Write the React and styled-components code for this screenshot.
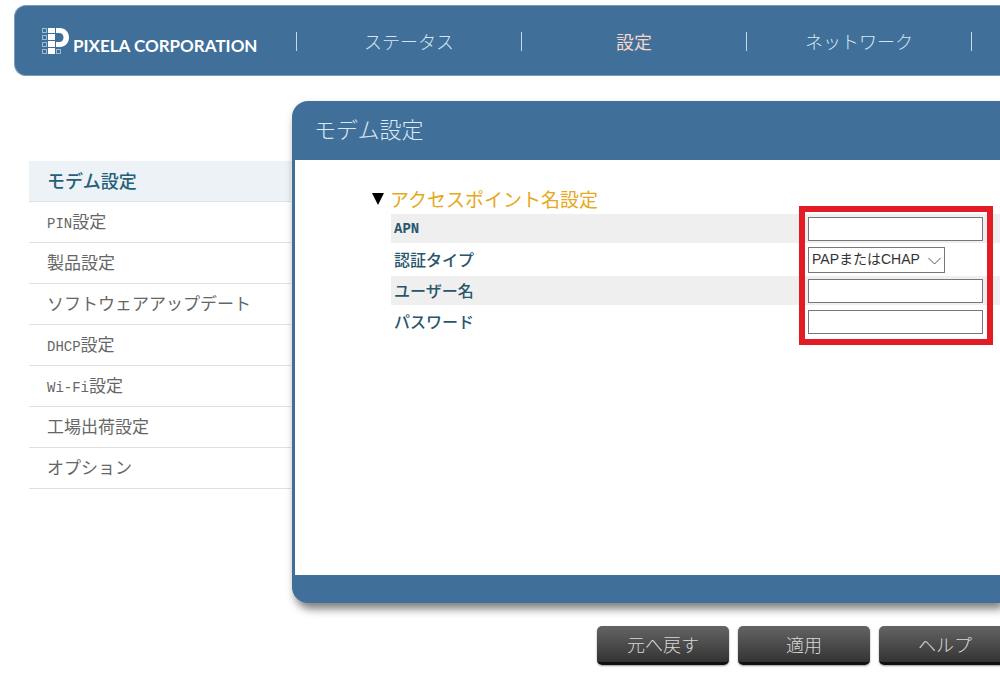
import React from "react";
import styled, { createGlobalStyle, css } from "styled-components";

const navItems = [
  { label: "ステータス" },
  { label: "設定", active: true },
  { label: "ネットワーク" },
];

const menuItems = [
  { label: "モデム設定", active: true },
  { latin: "PIN", label: "設定" },
  { label: "製品設定" },
  { label: "ソフトウェアアップデート" },
  { latin: "DHCP", label: "設定" },
  { latin: "Wi-Fi", label: "設定" },
  { label: "工場出荷設定" },
  { label: "オプション" },
];

const Logo = () => (
  <LogoLink href="#top">
    <svg width="28" height="28" viewBox="0 0 28 28" aria-hidden="true">
      <g fill="none" stroke="#9dbbd2" strokeWidth="1">
        <rect x="1.5" y="1.5" width="4" height="4" />
        <rect x="1.5" y="8.5" width="4" height="4" />
        <rect x="1.5" y="15.5" width="4" height="4" />
        <rect x="1.5" y="22.5" width="4" height="4" />
        <rect x="15.5" y="22.5" width="4" height="4" />
      </g>
      <g fill="#fff">
        <rect x="7" y="1" width="7" height="5" />
        <rect x="7" y="7" width="7" height="6" />
        <rect x="7" y="14" width="7" height="6" />
        <rect x="7" y="21" width="7" height="6" />
        <path d="M15 1h4c5 0 9 4 9 9.500s-4 9.500-9 9.500h-4v-5h3c3 0 4.500-2 4.500-4.500S21 6 18 6h-3z" />
      </g>
    </svg>
    <span>PIXELA CORPORATION</span>
  </LogoLink>
);

export default function App() {
  return (
    <Page>
      <GlobalStyle />

      <Header id="top">
        <Logo />
        <Nav>
          {navItems.map((item) => (
            <NavLink key={item.label} href="#nav" $active={item.active}>
              {item.label}
            </NavLink>
          ))}
          <NavEnd />
        </Nav>
      </Header>

      <Main>
        <Sidebar>
          {menuItems.map((item) => (
            <MenuLink
              key={(item.latin || "") + item.label}
              href="#menu"
              $active={item.active}
            >
              {item.latin && <Latin>{item.latin}</Latin>}
              {item.label}
            </MenuLink>
          ))}
        </Sidebar>

        <Content>
          <Panel>
            <PanelTitle>モデム設定</PanelTitle>
            <PanelBody>
              <SectionTitle>
                <svg width="12" height="12" viewBox="0 0 12 12" aria-hidden="true">
                  <path d="M0 0h12L6 12z" fill="#000" />
                </svg>
                アクセスポイント名設定
              </SectionTitle>
              <Fields>
                <Row $shaded>
                  <label htmlFor="apn">
                    <Latin $bold>APN</Latin>
                  </label>
                  <TextBox id="apn" type="text" />
                </Row>
                <Row>
                  <label htmlFor="auth">認証タイプ</label>
                  <SelectWrap>
                    <Select id="auth" defaultValue="both">
                      <option value="both">PAPまたはCHAP</option>
                    </Select>
                    <svg width="13" height="8" viewBox="0 0 13 8" aria-hidden="true">
                      <path d="M0.500 1l6 6 6-6" fill="none" stroke="#555" />
                    </svg>
                  </SelectWrap>
                </Row>
                <Row $shaded>
                  <label htmlFor="user">ユーザー名</label>
                  <TextBox id="user" type="text" />
                </Row>
                <Row>
                  <label htmlFor="pass">パスワード</label>
                  <TextBox id="pass" type="password" />
                </Row>
                <Highlight />
              </Fields>
            </PanelBody>
          </Panel>

          <Actions>
            <Button type="button">元へ戻す</Button>
            <Button type="button">適用</Button>
            <Button type="button">ヘルプ</Button>
          </Actions>
        </Content>
      </Main>
    </Page>
  );
}

const GlobalStyle = createGlobalStyle`
  * {
    box-sizing: border-box;
  }
  body {
    margin: 0;
    background: #fff;
    font-family: "Noto Sans CJK JP", sans-serif;
    overflow-x: hidden;
  }
  a {
    text-decoration: none;
  }
`;

const Page = styled.div`
  padding-top: 5px;
  overflow: hidden;
`;

const Header = styled.header`
  display: flex;
  align-items: center;
  height: 71px;
  margin-left: 14px;
  background: #407099;
  border: 1px solid #7c9dba;
  border-right: 0;
  border-radius: 12px 0 0 12px;
  overflow: hidden;
`;

const LogoLink = styled.a`
  display: flex;
  flex: 0 0 281px;
  align-items: center;
  gap: 4px;
  padding-left: 26px;
  color: #fff;
  font: bold 17px/28px Lato, sans-serif;
  white-space: nowrap;

  span {
    padding-top: 10px;
  }
`;

const Nav = styled.nav`
  display: flex;
  align-items: center;
  padding-top: 2px;
`;

const NavLink = styled.a`
  flex: 0 0 225px;
  border-left: 1px solid #c5d9e8;
  color: ${(p) => (p.$active ? "#f6d5cb" : "#d5e6f2")};
  font-size: 18px;
  font-weight: ${(p) => (p.$active ? 400 : 300)};
  line-height: 19px;
  text-align: center;
`;

const NavEnd = styled.span`
  height: 19px;
  border-left: 1px solid #c5d9e8;
`;

const Main = styled.main`
  display: flex;
  align-items: flex-start;
  padding: 25px 0 0 29px;
`;

const Sidebar = styled.nav`
  flex: 0 0 262px;
  margin: 60px 1px 0 0;
`;

const MenuLink = styled.a`
  display: block;
  height: 41px;
  padding-left: 18px;
  border-bottom: 1px solid #e0e0e0;
  color: #666;
  font-size: 17px;
  line-height: 38px;

  ${(p) =>
    p.$active &&
    css`
      background: #edf2f7;
      color: #256078;
      font-size: 18px;
      font-weight: 500;
    `}
`;

// half-width letters beside the full-width kana and kanji
const Latin = styled.span`
  font-family: "Liberation Mono", monospace;
  font-size: 14px;
  font-weight: ${(p) => (p.$bold ? 700 : 400)};
`;

const Content = styled.div`
  flex: 1;
  min-width: 0;
`;

const Panel = styled.section`
  background: #407099;
  border-radius: 16px 0 0 16px;
  padding: 0 0 28px 3px;
  box-shadow: 3px 6px 8px rgba(0, 0, 0, 0.5);
`;

const PanelTitle = styled.h1`
  margin: 0;
  padding: 0 0 4px 19px;
  color: #dbe9f4;
  font-size: 22px;
  font-weight: 300;
  line-height: 55px;
`;

const PanelBody = styled.div`
  min-height: 415px;
  padding: 25px 0 0 77px;
  background: #fff;
`;

const SectionTitle = styled.h2`
  display: flex;
  align-items: center;
  gap: 6px;
  margin: 0;
  padding-bottom: 1px;
  color: #e6a820;
  font-size: 19px;
  font-weight: 400;
  line-height: 28px;
`;

const Fields = styled.form`
  position: relative;
  display: flex;
  flex-direction: column;
  gap: 2px;
  margin-left: 19px;
`;

const Row = styled.div`
  display: grid;
  grid-template-columns: 414px 1fr;
  align-items: center;
  height: 29px;
  padding-left: 3px;
  background: ${(p) => (p.$shaded ? "#efefef" : "#fff")};
  color: #28566b;
  font-size: 16px;
  font-weight: 500;
  line-height: 24px;

  label {
    display: block;
    padding-bottom: 2px;
  }
`;

const TextBox = styled.input`
  width: 175px;
  height: 24px;
  padding: 1px 4px;
  border: 1px solid #777;
  border-radius: 0;
  background: #fff;
  outline: 0;
`;

const SelectWrap = styled.div`
  position: relative;
  width: 137px;
  height: 26px;

  svg {
    position: absolute;
    top: 10px;
    right: 4px;
    pointer-events: none;
  }
`;

const Select = styled.select`
  display: block;
  appearance: none;
  width: 100%;
  height: 26px;
  padding: 0 0 2px 3px;
  border: 1px solid #777;
  border-radius: 0;
  background: #fff;
  color: #333;
  font: 14px "Liberation Sans", "Noto Sans CJK JP", sans-serif;
`;

const Highlight = styled.div`
  position: absolute;
  top: -8px;
  bottom: -9px;
  left: 408px;
  width: 194px;
  border: 6px solid #e21b24;
  pointer-events: none;
`;

const Actions = styled.div`
  display: flex;
  gap: 9px;
  padding: 23px 0 9px 305px;
`;

const Button = styled.button`
  flex: 0 0 132px;
  height: 39px;
  padding: 0;
  border: 0;
  border-bottom: 3px solid #111;
  border-radius: 5px;
  background: linear-gradient(#646464, #343434);
  box-shadow: 0 1px 2px rgba(0, 0, 0, 0.4);
  color: #d8d8d8;
  font: 300 18px/36px "Noto Sans CJK JP", sans-serif;
`;
